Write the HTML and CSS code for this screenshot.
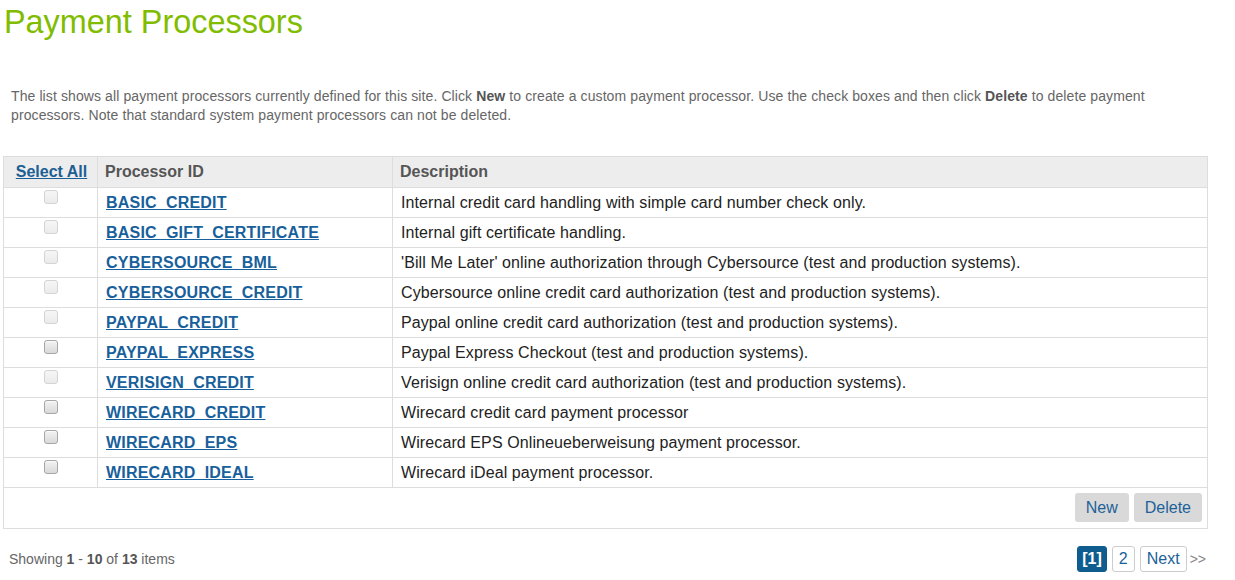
FILE: index.html
```html
<!DOCTYPE html>
<html>
<head>
<meta charset="utf-8">
<link rel="stylesheet" href="styles.css">
</head>
<body>
<div class="page">
  <h1 class="title">Payment Processors</h1>
  <p class="intro">The list shows all payment processors currently defined for this site. Click <b>New</b> to create a custom payment processor. Use the check boxes and then click <b>Delete</b> to delete payment processors. Note that standard system payment processors can not be deleted.</p>
  <table class="grid">
    <colgroup>
      <col class="c-sel">
      <col class="c-id">
      <col class="c-desc">
    </colgroup>
    <thead>
      <tr>
        <th class="col-sel"><a href="#" class="sel-all">Select All</a></th>
        <th class="col-id">Processor ID</th>
        <th class="col-desc">Description</th>
      </tr>
    </thead>
    <tbody>
      <tr><td class="cb"><input type="checkbox" disabled></td><td><a href="#" class="pid">BASIC_CREDIT</a></td><td>Internal credit card handling with simple card number check only.</td></tr>
      <tr><td class="cb"><input type="checkbox" disabled></td><td><a href="#" class="pid">BASIC_GIFT_CERTIFICATE</a></td><td>Internal gift certificate handling.</td></tr>
      <tr><td class="cb"><input type="checkbox" disabled></td><td><a href="#" class="pid">CYBERSOURCE_BML</a></td><td>'Bill Me Later' online authorization through Cybersource (test and production systems).</td></tr>
      <tr><td class="cb"><input type="checkbox" disabled></td><td><a href="#" class="pid">CYBERSOURCE_CREDIT</a></td><td>Cybersource online credit card authorization (test and production systems).</td></tr>
      <tr><td class="cb"><input type="checkbox" disabled></td><td><a href="#" class="pid">PAYPAL_CREDIT</a></td><td>Paypal online credit card authorization (test and production systems).</td></tr>
      <tr><td class="cb"><input type="checkbox"></td><td><a href="#" class="pid">PAYPAL_EXPRESS</a></td><td>Paypal Express Checkout (test and production systems).</td></tr>
      <tr><td class="cb"><input type="checkbox" disabled></td><td><a href="#" class="pid">VERISIGN_CREDIT</a></td><td>Verisign online credit card authorization (test and production systems).</td></tr>
      <tr><td class="cb"><input type="checkbox"></td><td><a href="#" class="pid">WIRECARD_CREDIT</a></td><td>Wirecard credit card payment processor</td></tr>
      <tr><td class="cb"><input type="checkbox"></td><td><a href="#" class="pid">WIRECARD_EPS</a></td><td>Wirecard EPS Onlineueberweisung payment processor.</td></tr>
      <tr><td class="cb"><input type="checkbox"></td><td><a href="#" class="pid">WIRECARD_IDEAL</a></td><td>Wirecard iDeal payment processor.</td></tr>
    </tbody>
    <tfoot>
      <tr>
        <td colspan="3" class="actions">
          <div class="btns">
            <button class="btn">New</button>
            <button class="btn">Delete</button>
          </div>
        </td>
      </tr>
    </tfoot>
  </table>
  <div class="pager-row">
    <div class="showing">Showing <b>1</b> - <b>10</b> of <b>13</b> items</div>
    <div class="pager">
      <span class="pg current">[1]</span>
      <a href="#" class="pg">2</a>
      <a href="#" class="pg">Next</a>
      <span class="pg-last">&gt;&gt;</span>
    </div>
  </div>
</div>
</body>
</html>
```

FILE: styles.css
```css
html, body {
  margin: 0;
  padding: 0;
  background: #fff;
}
body {
  font-family: "Liberation Sans", Arial, sans-serif;
  color: #222;
}
.page {
  padding: 0 0 0 3px;
  width: 1205px;
}
.title {
  margin: 4px 0 0 1px;
  font-size: 32.4px;
  font-weight: normal;
  color: #80bc00;
  line-height: 37px;
}
.intro {
  margin: 46px 0 0 0;
  padding: 0 40px 0 8px;
  font-size: 14px;
  letter-spacing: 0.1px;
  line-height: 19px;
  color: #666;
}
.intro b {
  color: #555;
}
.grid {
  margin-top: 31px;
  width: 1205px;
  table-layout: fixed;
  border-collapse: collapse;
  border: 1px solid #ddd;
  font-size: 16px;
}
.c-sel {
  width: 94px;
}
.c-id {
  width: 295px;
}
.grid th, .grid td {
  border: 1px solid #ddd;
  text-align: left;
  vertical-align: top;
}
.grid th {
  background: #ededed;
  color: #555;
  font-weight: bold;
  padding: 6px 7px 6px 7px;
  line-height: 18px;
}
.grid th.col-sel {
  text-align: center;
  padding: 6px 2px 6px 4px;
}
.sel-all {
  color: #1c5f94;
  text-decoration: underline;
}
.grid td {
  padding: 5px 8px 5px 8px;
  line-height: 19px;
  letter-spacing: 0.1px;
  color: #222;
}
.grid td.cb {
  text-align: center;
  padding: 2px 4px 0 4px;
}
.cb input {
  -webkit-appearance: none;
  appearance: none;
  display: block;
  margin: 0 auto;
  width: 14px;
  height: 14px;
  border: 1px solid #a6a6a6;
  border-radius: 3px;
  background: linear-gradient(#f2f2f2, #d9d9d9);
  box-shadow: inset 0 1px 1px rgba(255,255,255,0.8);
}
.cb input:disabled {
  border-color: #d4d4d4;
  background: linear-gradient(#f6f6f6, #ebebeb);
  box-shadow: none;
}
.pid {
  color: #17609b;
  font-weight: bold;
  letter-spacing: 0.2px;
  text-decoration: underline;
}
.grid td.actions {
  padding: 5px 5px 6px 5px;
}
.btns {
  display: flex;
  justify-content: flex-end;
  gap: 5px;
}
.btn {
  font-family: "Liberation Sans", Arial, sans-serif;
  font-size: 16px;
  height: 29px;
  padding: 0 11px;
  border: none;
  border-radius: 3px;
  background: #d9d9d9;
  color: #1c6298;
}
.pager-row {
  display: flex;
  justify-content: space-between;
  align-items: center;
  margin-top: 17px;
  padding-left: 6px;
}
.showing {
  font-size: 14px;
  color: #666;
}
.showing b {
  color: #555;
}
.pager {
  display: flex;
  align-items: center;
  gap: 5px;
  font-size: 16px;
}
.pg {
  box-sizing: border-box;
  height: 26px;
  line-height: 24px;
  padding: 0 6px;
  border: 1px solid #ccc;
  border-radius: 3px;
  color: #1c6298;
  text-decoration: none;
  background: #fff;
}
.pg.current {
  background: #0f5c8f;
  border-color: #0f5c8f;
  color: #fff;
  font-weight: bold;
  padding: 0 4px;
}
.pg-last {
  color: #888;
  font-size: 14px;
  margin-left: -2px;
  margin-right: 2px;
}
```
